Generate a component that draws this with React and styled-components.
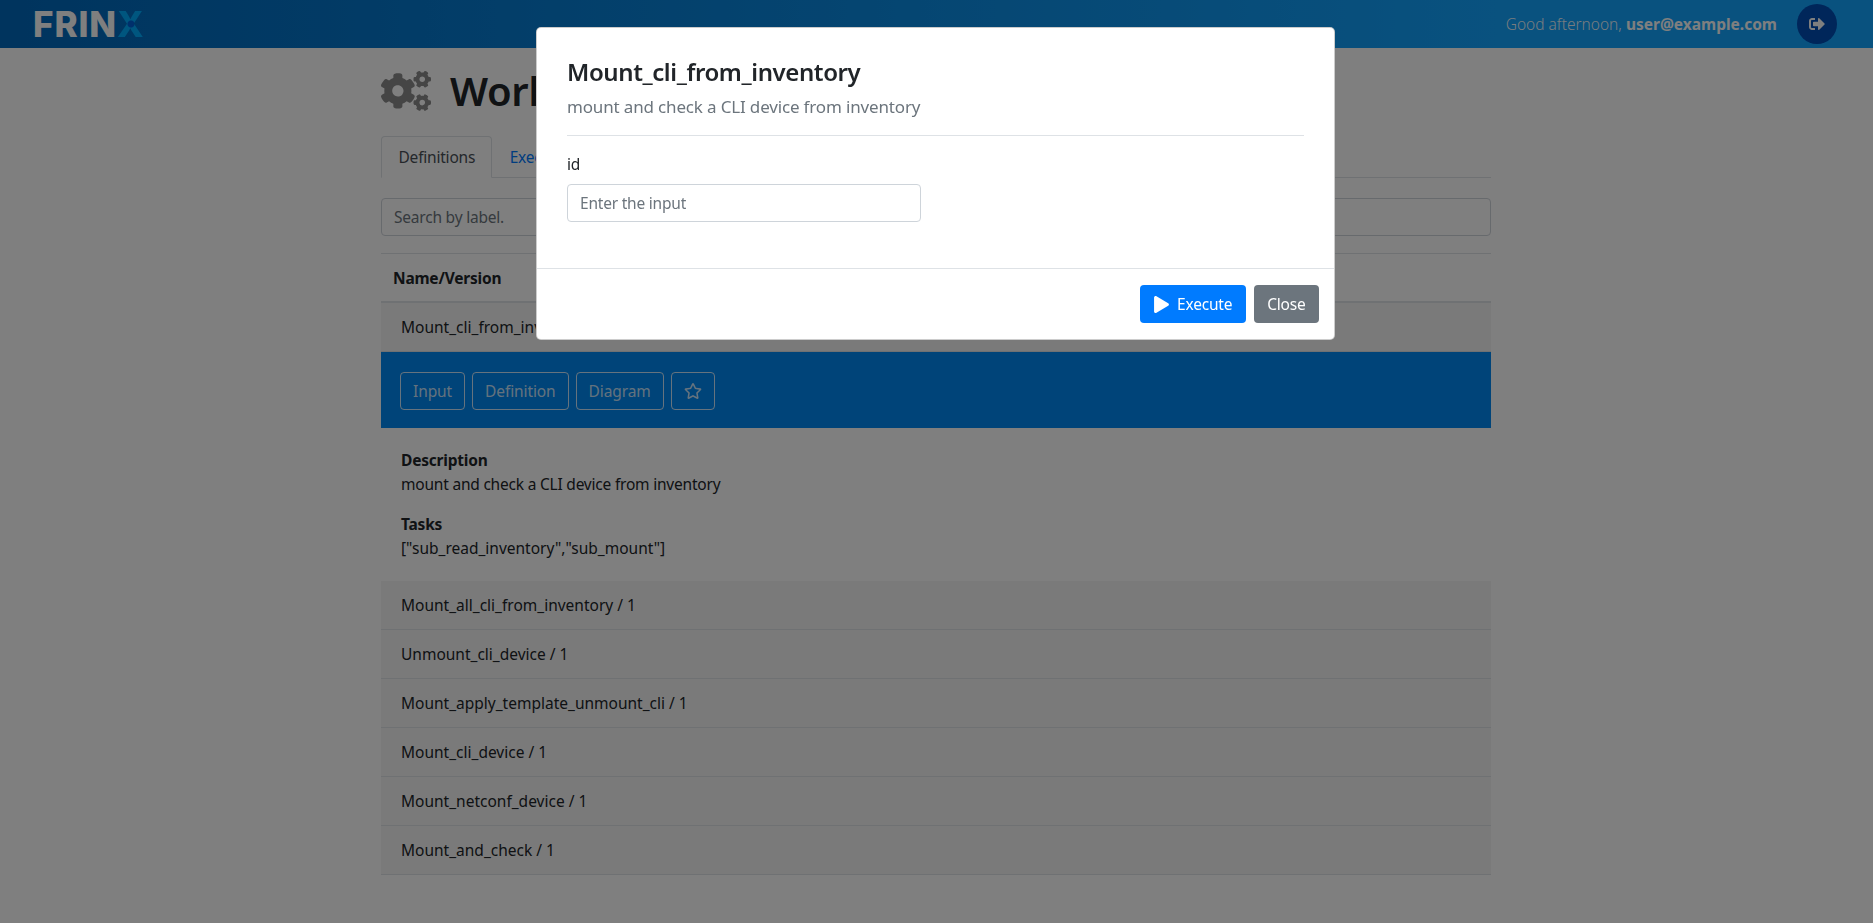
import React from 'react';
import styled, { createGlobalStyle } from 'styled-components';
import { FaCogs, FaSignOutAlt, FaRegStar, FaPlay } from 'react-icons/fa';

const Global = createGlobalStyle`
  html, body { margin: 0; padding: 0; background: #fff; }
  body { font-family: "Noto Sans", "Open Sans", sans-serif; font-size: 15.5px; letter-spacing: -.21px; line-height: 24px; color: #212529; min-height: 923px; }
  * { box-sizing: border-box; }
`;
const Header = styled.header`
  height: 48px; display: flex; align-items: center; justify-content: space-between;
  padding: 0 36px 0 33px;
  background: linear-gradient(90deg, #0068bc 0%, #12a4ff 80%);
`;
const Logo = styled.div`
  font-family: "Inter", sans-serif; font-weight: 800; font-size: 35px; line-height: 1; color: #fff; letter-spacing: .9px;
  span {
    background: radial-gradient(circle at 50% 50%, #0060d8 0 12%, #00acff 16%);
    -webkit-background-clip: text; background-clip: text; color: transparent;
  }
`;
const HeaderRight = styled.div`display: flex; align-items: center; gap: 20px;`;
const Greeting = styled.div`
  color: rgba(255,255,255,.95); font-weight: 300; letter-spacing: 0;
  b { font-weight: 700; color: #fff; }
`;
const LogoutButton = styled.div`
  width: 40px; height: 40px; border-radius: 50%; background: #004cb4; color: #fff;
  display: flex; align-items: center; justify-content: center; font-size: 16px;
`;
const Container = styled.main`width: 1110px; margin-left: 381px; padding-top: 18px;`;
const Title = styled.h1`
  margin: 0 0 20px; font-size: 40px; font-weight: 600; letter-spacing: -.4px; line-height: 48px; display: flex; align-items: center; gap: 19px;
  svg { color: #8a8a8a; font-size: 50px; }
`;
const Tabs = styled.div`display: flex; border-bottom: 1px solid #dee2e6; height: 42px;`;
const Tab = styled.div`
  padding: 8px 16px 8px 16.5px; height: 42px; border-radius: 4px 4px 0 0;
  color: ${p => p.$active ? '#495057' : '#007bff'};
  border: 1px solid ${p => p.$active ? '#dee2e6' : 'transparent'};
  border-bottom-color: ${p => p.$active ? '#fff' : 'transparent'};
`;
const Search = styled.input`
  display: block; width: 100%; height: 38px; margin: 20px 0 17px; padding: 6px 12px; font: inherit; letter-spacing: inherit;
  border: 1px solid #ced4da; border-radius: 4px;
  &::placeholder { color: #6c757d; }
`;
const Table = styled.div`border-top: 1px solid #dee2e6;`;
const HeadCell = styled.div`height: 49px; padding: 12px; font-weight: 700; border-bottom: 2px solid #dee2e6;`;
const Row = styled.div`
  height: 49px; padding: 12px 20px; background: #f5f5f5; border-bottom: 1px solid #dee2e6; letter-spacing: 0;
`;
const ActionBar = styled.div`
  height: 76px; background: #0088f2; padding: 20px 19px; display: flex; gap: 7px; align-items: flex-start;
`;
const OutlineButton = styled.div`
  height: 38px; padding: 6px 12px; border: 1px solid rgba(255,255,255,.8); border-radius: 4px; color: rgba(255,255,255,.8);
  display: flex; align-items: center; letter-spacing: -.1px;
  svg { font-size: 18px; }
`;
const Details = styled.div`padding: 20px 20px 21px;`;
const DetailBlock = styled.div`margin-bottom: 16px; &:last-child { margin-bottom: 0; } b { display: block; font-weight: 700; }`;
const TaskList = styled.span`letter-spacing: 0;`;
const Overlay = styled.div`position: fixed; inset: 0; background: rgba(0,0,0,.5);`;
const Modal = styled.div`
  position: fixed; top: 27px; left: 536px; width: 799px; background: #fff; border-radius: 5px; border: 1px solid rgba(0,0,0,.2);
`;
const ModalBody = styled.div`padding: 29px 30px 30px;`;
const ModalTitle = styled.h4`margin: 0; font-size: 24px; letter-spacing: -.4px; line-height: 29px; font-weight: 600;`;
const ModalSub = styled.div`color: #6c757d; font-size: 17px; letter-spacing: -.16px; margin: 9px 0 16px;`;
const Divider = styled.hr`margin: 0 0 16px; border: 0; border-top: 1px solid #dee2e6;`;
const FieldLabel = styled.label`display: block; margin-bottom: 8px;`;
const Field = styled.input`
  display: block; width: 354px; height: 38px; padding: 6px 12px; font: inherit; letter-spacing: inherit; border: 1px solid #ced4da; border-radius: 4px; margin-bottom: 16px;
  &::placeholder { color: #6c757d; }
`;
const ModalFooter = styled.div`
  display: flex; justify-content: flex-end; gap: 8px; padding: 16px 15px; border-top: 1px solid #dee2e6;
`;
const Button = styled.div`
  height: 38px; padding: 6px 13.5px; border-radius: 4px; color: #fff; display: flex; align-items: center; gap: 7px;
  background: ${p => p.$variant === 'primary' ? '#007bff' : '#6c757d'};
  svg { font-size: 17px; }
`;

const rows = ['Mount_all_cli_from_inventory / 1','Unmount_cli_device / 1','Mount_apply_template_unmount_cli / 1','Mount_cli_device / 1','Mount_netconf_device / 1','Mount_and_check / 1'];

export default function App() {
  return (
    <>
      <Global />
      <Header>
        <Logo>FRIN<span>X</span></Logo>
        <HeaderRight>
          <Greeting>Good afternoon, <b>user@example.com</b></Greeting>
          <LogoutButton><FaSignOutAlt /></LogoutButton>
        </HeaderRight>
      </Header>
      <Container>
        <Title><FaCogs />Workflows</Title>
        <Tabs>
          <Tab $active>Definitions</Tab>
          <Tab>Executed</Tab>
        </Tabs>
        <Search placeholder="Search by label." />
        <Table>
          <HeadCell>Name/Version</HeadCell>
          <Row>Mount_cli_from_inventory / 1</Row>
          <ActionBar>
            <OutlineButton>Input</OutlineButton>
            <OutlineButton>Definition</OutlineButton>
            <OutlineButton>Diagram</OutlineButton>
            <OutlineButton><FaRegStar /></OutlineButton>
          </ActionBar>
          <Details>
            <DetailBlock><b>Description</b>mount and check a CLI device from inventory</DetailBlock>
            <DetailBlock><b>Tasks</b><TaskList>["sub_read_inventory","sub_mount"]</TaskList></DetailBlock>
          </Details>
          {rows.map(r => <Row key={r}>{r}</Row>)}
        </Table>
      </Container>
      <Overlay />
      <Modal>
        <ModalBody>
          <ModalTitle>Mount_cli_from_inventory</ModalTitle>
          <ModalSub>mount and check a CLI device from inventory</ModalSub>
          <Divider />
          <FieldLabel>id</FieldLabel>
          <Field placeholder="Enter the input" />
        </ModalBody>
        <ModalFooter>
          <Button $variant="primary"><FaPlay />Execute</Button>
          <Button>Close</Button>
        </ModalFooter>
      </Modal>
    </>
  );
}
